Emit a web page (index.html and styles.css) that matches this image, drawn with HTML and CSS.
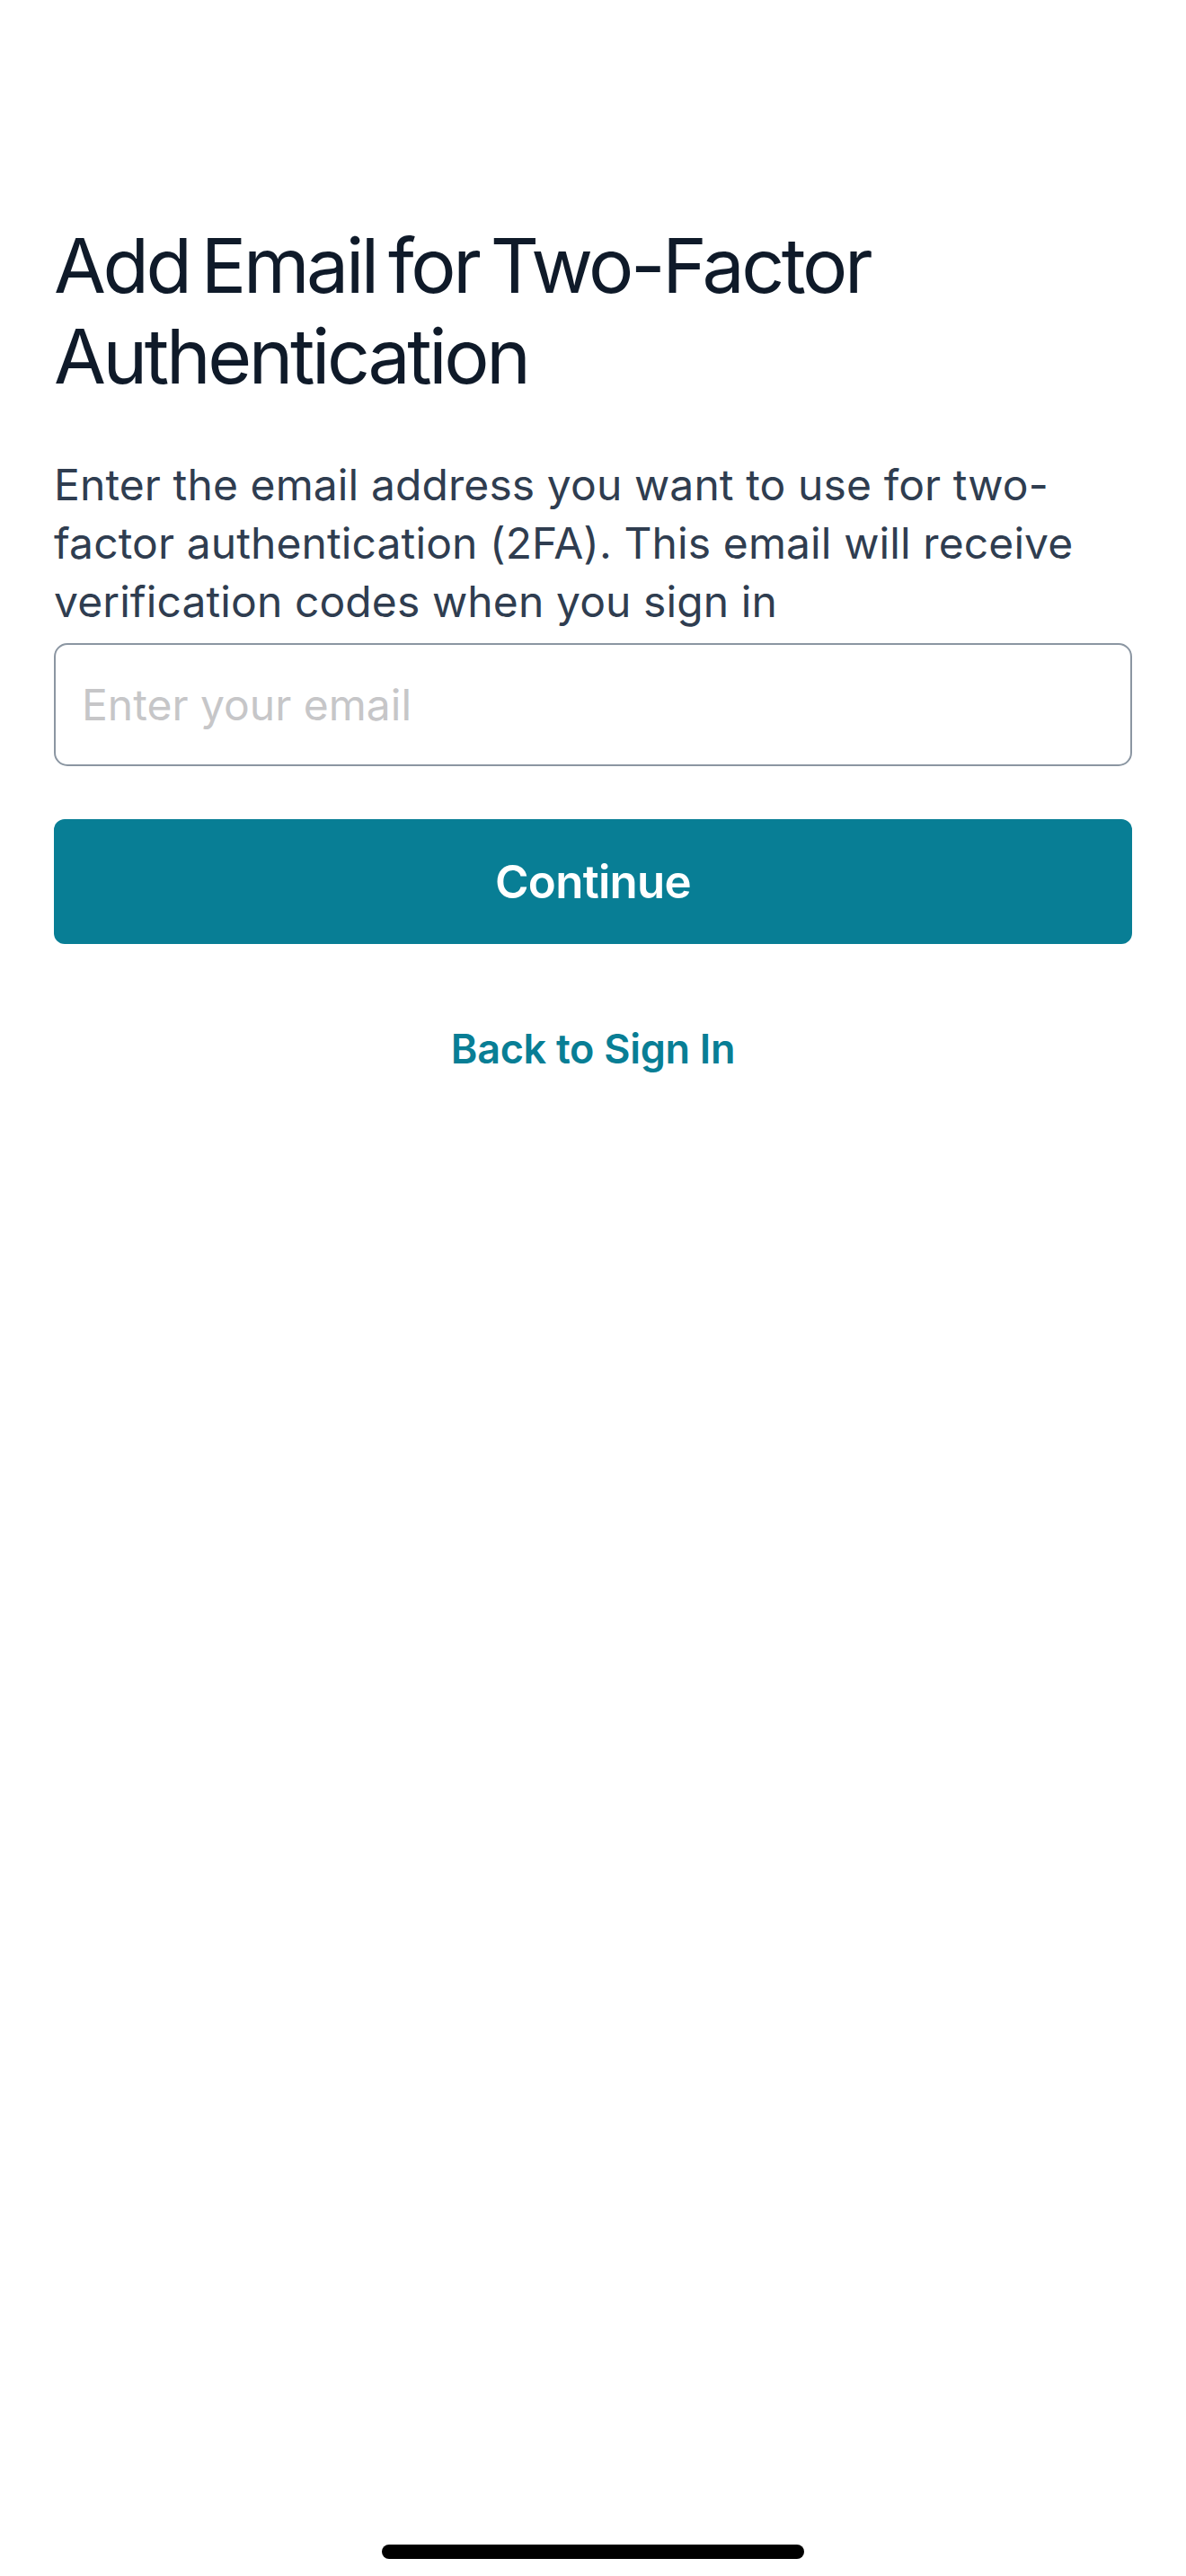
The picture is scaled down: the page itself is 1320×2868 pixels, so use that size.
FILE: index.html
```html
<!DOCTYPE html>
<html lang="en">
<head>
<meta charset="utf-8">
<title>Add Email for Two-Factor Authentication</title>
<link rel="stylesheet" href="styles.css">
</head>
<body>
<main class="screen">
  <h1 class="title">Add Email for Two-Factor Authentication</h1>
  <p class="lead">Enter the email address you want to use for two-factor authentication (2FA). This email will receive verification codes when you sign in</p>
  <input class="field" type="email" placeholder="Enter your email">
  <button class="primary" type="button">Continue</button>
  <a class="back" href="#">Back to Sign In</a>
</main>
<div class="home-indicator"></div>
</body>
</html>
```
FILE: styles.css
```css
html, body {
  margin: 0;
  padding: 0;
  background: #ffffff;
}
body {
  position: relative;
  min-height: 2868px;
  font-family: Inter, "Noto Sans", "Liberation Sans", sans-serif;
}
.screen {
  display: flex;
  flex-direction: column;
  padding: 245px 60px 0;
}
.title {
  margin: 0;
  font-size: 84px;
  line-height: 101px;
  font-weight: 400;
  color: #0f1a29;
  letter-spacing: -3.4px;
  word-spacing: -7px;
}
.lead {
  margin: 60px 0 14px;
  font-size: 48px;
  line-height: 65px;
  font-weight: 400;
  color: #2f3d50;
  letter-spacing: 0.1px;
}
.field {
  box-sizing: border-box;
  width: 100%;
  height: 137px;
  margin: 0;
  padding: 0 29px;
  border: 2px solid #8b96a2;
  border-radius: 15px;
  background: #fff;
  font-family: inherit;
  font-size: 48px;
  color: #0f1a29;
  outline: none;
  letter-spacing: 0;
}
.field::placeholder {
  color: #c6c6c8;
}
.primary {
  box-sizing: border-box;
  width: 100%;
  height: 139px;
  margin-top: 59px;
  border: none;
  border-radius: 12px;
  background: #087e95;
  color: #ffffff;
  font-family: inherit;
  font-size: 51px;
  font-weight: 600;
  letter-spacing: -0.7px;
}
.back {
  display: block;
  margin-top: 90px;
  text-align: center;
  font-size: 45px;
  line-height: 54px;
  font-weight: 600;
  color: #087e95;
  text-decoration: none;
  letter-spacing: -0.3px;
}
.home-indicator {
  position: absolute;
  left: 425px;
  bottom: 19px;
  width: 470px;
  height: 16px;
  border-radius: 8px;
  background: #000000;
}
```
